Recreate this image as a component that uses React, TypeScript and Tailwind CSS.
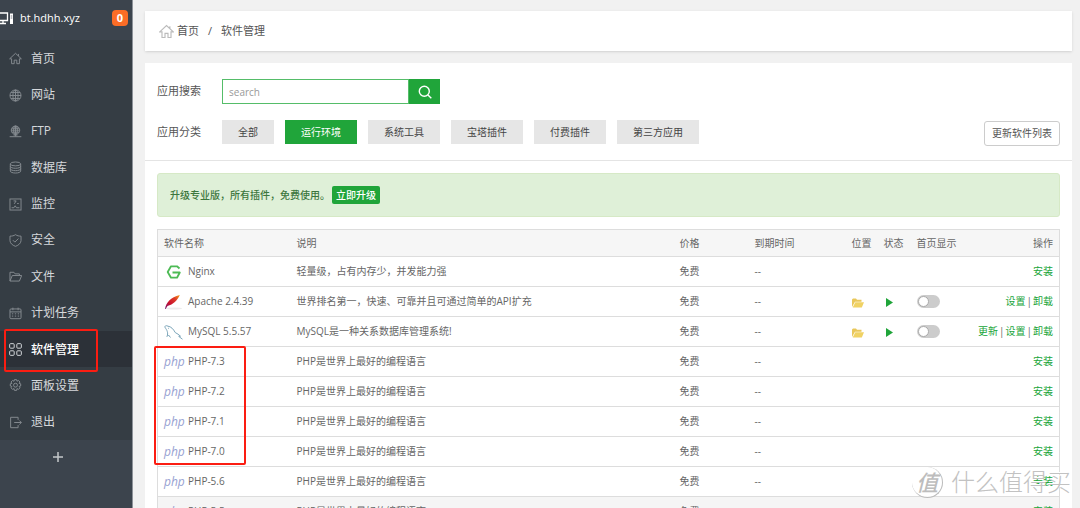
import type { ReactNode } from "react";

type IconName =
  | "home" | "globe" | "ftp" | "database" | "monitor" | "shield"
  | "folder" | "calendar" | "apps" | "gear" | "exit";

const iconShapes: Record<IconName, ReactNode> = {
  home: <path d="M1 10.500 10 2l9 8.500h-3V18h-4v-5.500H8V18H4v-7.500zM14.500 3v3" />,
  globe: (
    <>
      <circle cx="10" cy="10" r="8.500" />
      <ellipse cx="10" cy="10" rx="4" ry="8.500" />
      <path d="M10 1.500v17M1.500 10h17M3 5.500h14M3 14.500h14" />
    </>
  ),
  ftp: (
    <>
      <circle cx="10" cy="8" r="6.500" />
      <ellipse cx="10" cy="8" rx="3" ry="6.500" />
      <path d="M10 1.500v16M3.500 8h13M4.500 5h11M4.500 11h11M1 18h18M7 15.500h6" />
    </>
  ),
  database: (
    <>
      <ellipse cx="10" cy="4.500" rx="8" ry="3" />
      <path d="M2 4.500v11c0 1.700 3.600 3 8 3s8-1.300 8-3v-11M2 8.200c0 1.700 3.600 3 8 3s8-1.300 8-3M2 11.900c0 1.700 3.600 3 8 3s8-1.300 8-3" />
    </>
  ),
  monitor: (
    <>
      <rect x="1.500" y="1.500" width="17" height="17" />
      <path d="M4 15h3.500l2-3 2 3H16M7 4.500h4l-3 4.500M12.500 8.500H15" />
    </>
  ),
  shield: (
    <path d="M10 1c2.500 1.800 5.500 2.300 8.500 2.300V10c0 4-3.500 7.200-8.500 9-5-1.800-8.500-5-8.500-9V3.300C4.500 3.300 7.500 2.800 10 1zM6 9.500l3 3 5.500-5.500" />
  ),
  folder: <path d="M1.500 17V3.500h6l2 2.500H16v2.500M1.500 17 5 8.500h14.500l-3.500 8.500z" />,
  calendar: (
    <>
      <rect x="1.500" y="3" width="17" height="15" rx="1.500" />
      <path d="M1.500 7.500h17M6 1v4M14 1v4M4.500 10.500h2M9 10.500h2M13.500 10.500h2M4.500 14h2M9 14h2M13.500 14h2" />
    </>
  ),
  apps: (
    <>
      <rect x="1" y="1" width="7" height="7" rx="1.500" />
      <rect x="12" y="1" width="7" height="7" rx="1.500" />
      <rect x="1" y="12" width="7" height="7" rx="1.500" />
      <rect x="12" y="12" width="7" height="7" rx="1.500" />
    </>
  ),
  gear: (
    <>
      <path d="M8.300 1h3.400l.6 2.500 2.200-1.300 2.400 2.400-1.300 2.200 2.400.6v3.400l-2.400.6 1.300 2.200-2.400 2.400-2.200-1.300-.6 2.800H8.300l-.6-2.800-2.200 1.300-2.400-2.400 1.300-2.200-2.400-.6V7.400l2.400-.6-1.300-2.200 2.400-2.400 2.200 1.300z" />
      <circle cx="10" cy="9.500" r="3" />
    </>
  ),
  exit: <path d="M14 6V2H2.500v16H14v-4M8 10h11M16 7l3 3-3 3" />,
};

function Icon({ name, className }: { name: IconName; className: string }) {
  return (
    <svg viewBox="0 0 20 20" fill="none" stroke="currentColor" strokeWidth="1.5" aria-hidden="true" className={className}>
      {iconShapes[name]}
    </svg>
  );
}

const menu: { label: string; icon: IconName; active?: boolean }[] = [
  { label: "首页", icon: "home" },
  { label: "网站", icon: "globe" },
  { label: "FTP", icon: "ftp" },
  { label: "数据库", icon: "database" },
  { label: "监控", icon: "monitor" },
  { label: "安全", icon: "shield" },
  { label: "文件", icon: "folder" },
  { label: "计划任务", icon: "calendar" },
  { label: "软件管理", icon: "apps", active: true },
  { label: "面板设置", icon: "gear" },
  { label: "退出", icon: "exit" },
];

function Sidebar() {
  return (
    <aside className="relative flex w-[133px] shrink-0 flex-col border-r border-[#8d9299] bg-[#3c444d] text-[#d5d8db]">
      <div className="flex h-10 shrink-0 items-center pb-1 pr-1 text-white">
        <svg viewBox="0 0 14 14" fill="none" stroke="currentColor" aria-hidden="true" className="h-[14px] w-[14px] shrink-0">
          <path d="M0 2h7.500v7.500H0M0 12.500h6M3 9.500v3" strokeWidth="1.300" />
          <path d="M10 2.500h3v10.500h-3z" fill="currentColor" stroke="none" />
          <path d="M10.700 5h1.600M10.700 7h1.600" stroke="#3c444d" strokeWidth=".7" />
        </svg>
        <span className="ml-[6px] flex-1 text-[11px] font-medium">bt.hdhh.xyz</span>
        <span className="flex h-4 w-4 items-center justify-center rounded-[4px] bg-[#fc6d26] text-[11px] font-bold">0</span>
      </div>
      <nav className="flex h-[400px] shrink-0 flex-col bg-[#353d44]">
        {menu.map((item) => (
          <a
            key={item.label}
            href="#"
            className={`flex flex-1 items-center gap-[9px] pl-[9px] pt-px text-[12px] ${
              item.active ? "bg-[#2c3138] font-medium text-white" : ""
            }`}
          >
            <Icon name={item.icon} className={`h-[13px] w-[13px] ${item.active ? "text-[#d5d8db]" : "text-[#858b90]"}`} />
            {item.label}
          </a>
        ))}
      </nav>
      <button type="button" aria-label="添加" className="flex h-[34px] items-center justify-center pr-4 text-[#c3c7ca]">
        <svg viewBox="0 0 10 10" stroke="currentColor" strokeWidth="1.500" aria-hidden="true" className="h-[10px] w-[10px]">
          <path d="M5 0v10M0 5h10" />
        </svg>
      </button>
      <div className="pointer-events-none absolute left-1 top-[329px] h-[43px] w-[94px] rounded-[2px] border-2 border-[#fb1d12]" />
    </aside>
  );
}

const categories = ["全部", "运行环境", "系统工具", "宝塔插件", "付费插件", "第三方应用"];

function NginxLogo() {
  return (
    <svg viewBox="0 0 19 16" fill="none" stroke="#4dbb55" strokeWidth="1.800" aria-hidden="true" className="h-4 w-[19px]">
      <path d="M15.500 4.500 13 2.300H7L3.700 8 7 13.700h6L15.800 8.500H8.500" strokeLinejoin="round" />
    </svg>
  );
}

function ApacheLogo() {
  return (
    <svg viewBox="0 0 19 16" aria-hidden="true" className="h-4 w-[19px]">
      <defs>
        <linearGradient id="feather" x1="0" y1="1" x2="1" y2="0">
          <stop offset="0" stopColor="#6d1b78" />
          <stop offset=".35" stopColor="#c8102e" />
          <stop offset=".7" stopColor="#dd3b27" />
          <stop offset="1" stopColor="#f6a01a" />
        </linearGradient>
      </defs>
      <ellipse cx="10" cy="14.500" rx="8" ry="1" fill="#ececec" />
      <path d="M1 15C2 9 6.500 3 15.800 1 13.500 6.500 9 10.500 3.500 12L1.700 15z" fill="url(#feather)" />
    </svg>
  );
}

function MysqlLogo() {
  return (
    <svg viewBox="0 0 19 16" fill="none" stroke="#7ba5b9" aria-hidden="true" className="h-4 w-[19px]">
      <path d="M3 12.500C4.500 9 3 6 1.200 3.800.2 2 2 1 4 2.200c3 .3 5.500 3 7.200 6.300 1.800 1 4 2.300 5.300 3.700l-1.800.2 3.800 2.800M3 12.500l1.500-1.500 2 2.500" />
      <path d="M4 4.300h.8" />
    </svg>
  );
}

function PhpLogo() {
  return (
    <span aria-hidden="true" className="w-[19px] text-[12px] italic leading-4 text-[#98a2d2]">
      php
    </span>
  );
}

type Row = { name: string; logo: ReactNode; desc: string; installed?: boolean; actions: string[] };

const phpRow = (version: string): Row => ({
  name: `PHP-${version}`,
  logo: <PhpLogo />,
  desc: "PHP是世界上最好的编程语言",
  actions: ["安装"],
});

const rows: Row[] = [
  { name: "Nginx", logo: <NginxLogo />, desc: "轻量级，占有内存少，并发能力强", actions: ["安装"] },
  { name: "Apache 2.4.39", logo: <ApacheLogo />, desc: "世界排名第一，快速、可靠并且可通过简单的API扩充", installed: true, actions: ["设置", "卸载"] },
  { name: "MySQL 5.5.57", logo: <MysqlLogo />, desc: "MySQL是一种关系数据库管理系统!", installed: true, actions: ["更新", "设置", "卸载"] },
  ...["7.3", "7.2", "7.1", "7.0", "5.6", "5.5"].map(phpRow),
];

function SoftwareTable() {
  return (
    <div className="relative mx-3 mt-3">
      <table className="w-full table-fixed border-collapse border border-[#ddd] text-left text-[10px] text-[#666]">
        <colgroup>
          <col className="w-[132px]" />
          <col />
          <col className="w-[75px]" />
          <col className="w-[97px]" />
          <col className="w-[32px]" />
          <col className="w-[33px]" />
          <col className="w-[56px]" />
          <col className="w-[94px]" />
        </colgroup>
        <thead>
          <tr className="h-[27px] bg-[#f6f6f6] whitespace-nowrap">
            {["软件名称", "说明", "价格", "到期时间", "位置", "状态", "首页显示", "操作"].map((title) => (
              <th key={title} scope="col" className="p-0 pl-[7px] font-normal first:pl-[6px] last:pr-[6px] last:text-right">
                {title}
              </th>
            ))}
          </tr>
        </thead>
        <tbody>
          {rows.map((row) => (
            <tr key={row.name} className="h-[30px] whitespace-nowrap border-t border-[#ddd] last:bg-[#f5f5f5]">
              <td className="p-0 pl-[6px]">
                <div className="flex items-center gap-[5px]">
                  {row.logo}
                  {row.name}
                </div>
              </td>
              <td className="p-0 pl-[7px]">{row.desc}</td>
              <td className="p-0 pl-[7px]">免费</td>
              <td className="p-0 pl-[7px]">--</td>
              <td className="p-0 pl-[7px]">
                {row.installed && (
                  <a href="#" aria-label="打开目录" className="block w-3">
                    <svg viewBox="0 0 12 10" aria-hidden="true" className="mt-[2px] h-[10px] w-3">
                      <path d="M0 9V1.500L1 .5h3l1 1.200h4.500v2H3z" fill="#e9c75a" />
                      <path d="M3.300 4.300H12L9.800 9.500H.7z" fill="#f0d264" />
                    </svg>
                  </a>
                )}
              </td>
              <td className="p-0 pl-[9px]">
                {row.installed && (
                  <svg viewBox="0 0 7 9" aria-label="运行中" role="img" className="mt-[2px] h-[9px] w-[7px]">
                    <path d="M0 0l7 4.500L0 9z" fill="#20a53a" />
                  </svg>
                )}
              </td>
              <td className="p-0 pl-[7px]">
                {row.installed && (
                  <input
                    type="checkbox"
                    role="switch"
                    aria-label={`${row.name} 首页显示`}
                    className="block h-[13px] w-[23px] appearance-none rounded-full bg-[#ccc] p-px before:block before:h-[11px] before:w-[11px] before:rounded-full before:border before:border-[#aaa] before:bg-white checked:bg-[#20a53a] checked:before:ml-[10px]"
                  />
                )}
              </td>
              <td className="p-0 pr-[6px] text-right">
                {row.actions.map((action, i) => (
                  <span key={action}>
                    {i > 0 && <span className="px-px">|</span>}
                    <a href="#" className="text-[#20a53a]">{action}</a>
                  </span>
                ))}
              </td>
            </tr>
          ))}
        </tbody>
      </table>
      <div className="pointer-events-none absolute -left-[3px] top-[117px] h-[119px] w-[92px] rounded-[2px] border-2 border-[#fb1d12]" />
    </div>
  );
}

export default function App() {
  return (
    <div className="relative flex h-screen overflow-hidden bg-[#f1f1f1] font-['Open_Sans','Noto_Sans_CJK_SC',sans-serif] text-[#555]">
      <Sidebar />
      <main className="min-w-0 flex-1 pl-3 pr-2 pt-[11px]">
        <div className="flex h-10 items-center bg-white pl-[14px] text-[11px] shadow-sm">
          <Icon name="home" className="mr-[3px] h-[15px] w-[15px] text-[#bbb]" />
          <a href="#">首页</a>
          <span className="mx-[9px]">/</span>
          <span>软件管理</span>
        </div>

        <section className="mt-3 bg-white pt-4">
          <form className="flex h-[25px] items-center pl-3 text-[11px]">
            <label htmlFor="search" className="w-[65px]">应用搜索</label>
            <input
              id="search"
              type="text"
              placeholder="search"
              className="h-full w-[187px] border border-solid border-[#55bd69] px-[6px] text-[10px] outline-none placeholder:text-[#999]"
            />
            <button type="button" aria-label="搜索" className="flex h-full w-[31px] items-center justify-center bg-[#20a53a] text-white">
              <svg viewBox="0 0 14 14" fill="none" stroke="currentColor" strokeWidth="1.400" aria-hidden="true" className="h-[14px] w-[14px]">
                <circle cx="6.300" cy="6.300" r="5" />
                <path d="M10 10l3.300 3.300" />
              </svg>
            </button>
          </form>

          <div className="mt-4 flex h-6 items-center pl-3 pr-3 text-[11px]">
            <span className="w-[65px]">应用分类</span>
            <div className="flex flex-1 gap-[11px] text-[10px]">
              {categories.map((name) => (
                <button
                  key={name}
                  type="button"
                  className={`h-6 px-4 ${name === "运行环境" ? "bg-[#20a53a] text-white" : "bg-[#e6e6e6] text-[#444]"}`}
                >
                  {name}
                </button>
              ))}
            </div>
            <button type="button" className="mt-[3px] h-[25px] rounded-[3px] border border-[#ccc] bg-white px-[7px] text-[10px]">
              更新软件列表
            </button>
          </div>

          <hr className="mt-4 border-[#e4e4e4]" />

          <div className="mx-3 mt-3 flex h-11 items-center gap-[2px] rounded-[3px] border border-[#d6e9c6] bg-[#dff0d8] pl-3 text-[10px] font-medium text-[#3c763d]">
            <span>升级专业版，所有插件，免费使用。</span>
            <button type="button" className="h-[18px] rounded-[2px] bg-[#20a53a] px-1 font-medium text-white">立即升级</button>
          </div>

          <SoftwareTable />
        </section>
      </main>

      <div className="pointer-events-none absolute bottom-[9px] right-[9px] flex items-center gap-2">
        <span className="flex h-[31px] w-[31px] items-center justify-center rounded-full border-b border-r border-[#bbb] bg-white/80 text-[22px] font-medium italic leading-none text-[#bdbdbd]">
          值
        </span>
        <span className="text-[24px] font-light leading-[34px] text-[#c2c2c2] [text-shadow:-1px_-1px_0px_#fff]">什么值得买</span>
      </div>
    </div>
  );
}
